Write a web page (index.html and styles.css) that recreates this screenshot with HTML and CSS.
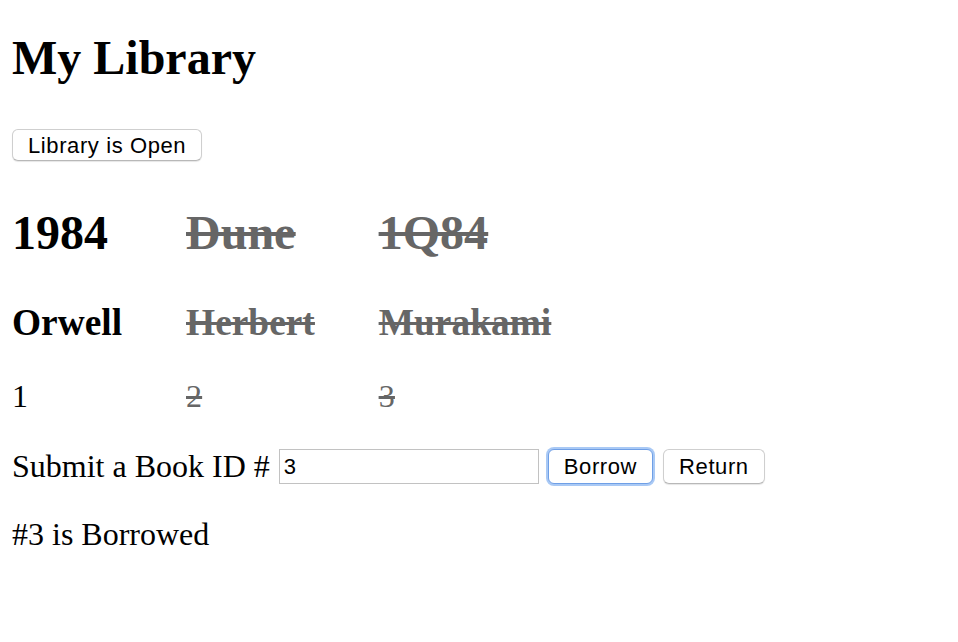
FILE: index.html
```html
<!DOCTYPE html>
<html>
<head>
<meta charset="utf-8">
<title>My Library</title>
<link rel="stylesheet" href="styles.css">
</head>
<body>
<div class="app">
  <h1 class="title">My Library</h1>
  <div class="status"><button class="btn">Library is Open</button></div>
  <div class="books">
    <div class="book">
      <h2 class="book-title">1984</h2>
      <h3 class="book-author">Orwell</h3>
      <p class="book-id">1</p>
    </div>
    <div class="book borrowed">
      <h2 class="book-title">Dune</h2>
      <h3 class="book-author">Herbert</h3>
      <p class="book-id">2</p>
    </div>
    <div class="book borrowed">
      <h2 class="book-title">1Q84</h2>
      <h3 class="book-author">Murakami</h3>
      <p class="book-id">3</p>
    </div>
  </div>
  <form class="form">
    <label class="label">Submit a Book ID #</label>
    <input class="input" type="text" value="3">
    <button type="button" class="btn focused">Borrow</button>
    <button type="button" class="btn">Return</button>
  </form>
  <p class="message">#3 is Borrowed</p>
</div>
</body>
</html>
```

FILE: styles.css
```css
html, body {
  margin: 0;
  padding: 0;
  background: #fff;
}
body {
  font-family: "Liberation Serif", "Times New Roman", serif;
  font-size: 32px;
  color: #000;
}
.app {
  padding: 30px 12px 0;
}
.title {
  font-size: 48px;
  font-weight: bold;
  margin: 0;
  line-height: 55px;
}
.status {
  margin-top: 44px;
  height: 32px;
  display: flex;
}
.btn {
  font-family: "Liberation Sans", Arial, sans-serif;
  font-size: 22px;
  letter-spacing: 0.6px;
  height: 32px;
  padding: 2px 15px 0;
  background: #fff;
  border: 1px solid #cfcfcf;
  border-bottom-color: #b8b8b8;
  border-radius: 6px;
  box-shadow: 0 1px 1px rgba(0,0,0,0.10);
  color: #000;
  margin: 0;
  line-height: 1;
}
.books {
  display: flex;
  gap: 64px;
  margin-top: 44px;
}
.book-title {
  font-size: 48px;
  font-weight: bold;
  margin: 0;
  line-height: 55px;
}
.book-author {
  font-size: 37.4px;
  font-weight: bold;
  margin: 41px 0 0;
  line-height: 43px;
}
.book-id {
  margin: 34px 0 0;
  line-height: 37px;
}
.borrowed {
  color: #666;
  text-decoration: line-through;
}
.borrowed * {
  text-decoration: line-through;
}
.form {
  margin-top: 32px;
  display: flex;
  align-items: center;
  height: 38px;
  line-height: 37px;
}
.label {
  margin-right: 9px;
}
.input {
  font-family: "Liberation Sans", Arial, sans-serif;
  font-size: 22px;
  width: 260px;
  height: 35px;
  box-sizing: border-box;
  border: 1px solid #c2c2c2;
  padding: 2px 4px 0;
  margin: 0 9px 0 0;
  color: #000;
  outline: none;
}
.form .btn {
  height: 35px;
  margin-right: 10px;
}
.focused {
  border-color: #6f9fe6;
  box-shadow: 0 0 0 2px #a9c9f5;
}
.message {
  margin: 31px 0 0;
  line-height: 37px;
}
```
